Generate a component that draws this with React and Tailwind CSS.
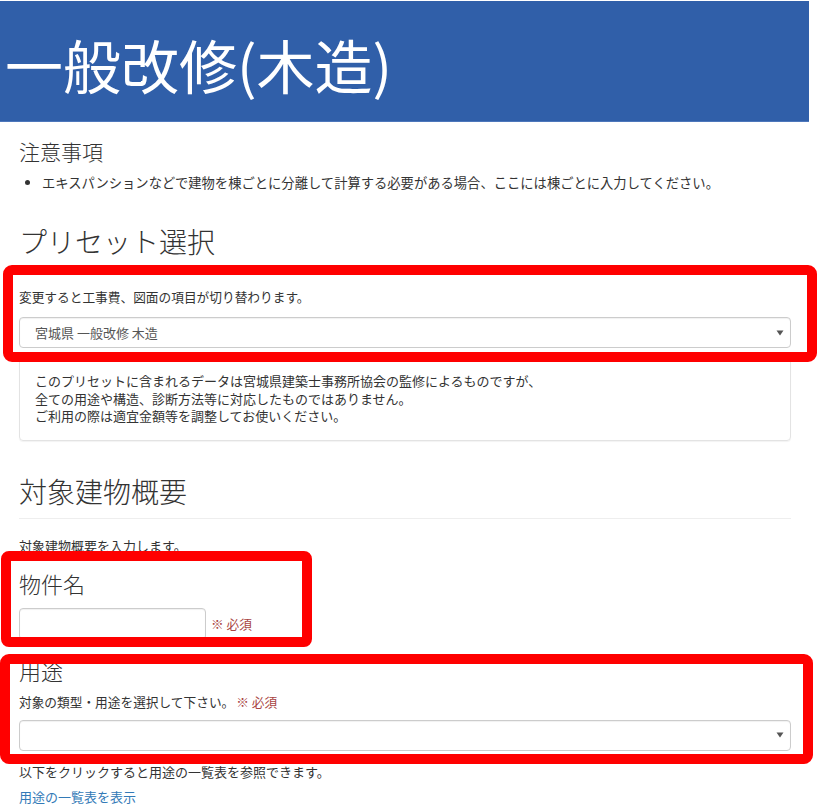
import React from "react";

function Arrow() {
  return (
    <svg width="8" height="6" viewBox="0 0 8 6" className="shrink-0">
      <path d="M0.5 0.5 L7.5 0.5 L4 5.5 Z" fill="#555" />
    </svg>
  );
}

function SelectBox({ value, className = "" }) {
  return (
    <div
      className={`h-[31px] w-[772px] border border-[#cccccc] rounded-[4px] bg-white flex items-center justify-between pl-[15px] pr-[6px] shadow-[inset_0_1px_1px_rgba(0,0,0,0.06)] ${className}`}
    >
      <span className="text-[13px] leading-[20px] text-[#555]">{value}</span>
      <Arrow />
    </div>
  );
}

export default function App() {
  return (
    <div className="relative w-[818px] min-h-[811px] bg-white text-[#333] font-['Noto_Sans_CJK_JP','Noto_Sans',sans-serif] overflow-hidden">
      <div className="pt-px">
        <header className="h-[121px] w-[809px] bg-[#305fa9] border-b border-[#4d77bb] flex items-center pl-[5px] pt-[6px]">
          <h1 className="text-[58px] leading-[60px] text-white font-normal">
            一般改修(木造)
          </h1>
        </header>
      </div>

      <main className="pl-[19px] w-[791px]">
        <h2 className="mt-[17px] text-[21px] leading-[24px] font-light">注意事項</h2>
        <ul className="mt-[10px] pl-[23px] list-disc text-[13.3px] leading-[20px]">
          <li>エキスパンションなどで建物を棟ごとに分離して計算する必要がある場合、ここには棟ごとに入力してください。</li>
        </ul>

        <h2 className="mt-[31px] text-[28px] leading-[34px] font-light">プリセット選択</h2>
        <p className="mt-[29px] text-[12.7px] leading-[20px]">変更すると工事費、図面の項目が切り替わります。</p>
        <SelectBox value="宮城県 一般改修 木造" className="mt-[10px]" />
        <div className="mt-[8px] border border-[#e3e3e3] rounded-[4px] px-[15px] py-[15px] text-[13px] leading-[17.5px] shadow-[0_1px_1px_rgba(0,0,0,0.05)]">
          <p>このプリセットに含まれるデータは宮城県建築士事務所協会の監修によるものですが、</p>
          <p>全ての用途や構造、診断方法等に対応したものではありません。</p>
          <p>ご利用の際は適宜金額等を調整してお使いください。</p>
        </div>

        <h2 className="mt-[33px] text-[28px] leading-[34px] font-light">対象建物概要</h2>
        <hr className="mt-[10px] border-0 border-t border-[#eeeeee]" />
        <p className="mt-[17px] text-[13px] leading-[20px]">対象建物概要を入力します。</p>

        <h3 className="mt-[14px] text-[22px] leading-[26px] font-light">物件名</h3>
        <div className="mt-[12px] flex items-center h-[32px]">
          <div className="h-[32px] w-[187px] border border-[#cccccc] rounded-[4px] bg-white shadow-[inset_0_1px_1px_rgba(0,0,0,0.06)]" />
          <span className="ml-[5px] text-[12.7px] leading-[20px] text-[#a94442]">※ 必須</span>
        </div>

        <h3 className="mt-[17px] text-[22px] leading-[26px] font-light">用途</h3>
        <p className="mt-[9px] text-[12.7px] leading-[20px]">
          対象の類型・用途を選択して下さい。
          <span className="ml-[2px] text-[#a94442]">※ 必須</span>
        </p>
        <SelectBox value="" className="mt-[8px]" />
        <p className="mt-[11px] text-[13px] leading-[20px]">以下をクリックすると用途の一覧表を参照できます。</p>
        <p className="mt-[5px] text-[13px] leading-[20px] text-[#337ab7]">用途の一覧表を表示</p>
      </main>

      {/* annotation overlays */}
      <div className="pointer-events-none absolute left-[3px] top-[265px] w-[814px] h-[97px] border-[10px] border-[#ff0000] rounded-[9px]" />
      <div className="pointer-events-none absolute left-[1px] top-[551px] w-[311px] h-[96px] border-[10px] border-[#ff0000] rounded-[8px]" />
      <div className="pointer-events-none absolute left-[0px] top-[654px] w-[813px] h-[110px] border-[10px] border-[#ff0000] rounded-[9px]" />
    </div>
  );
}
